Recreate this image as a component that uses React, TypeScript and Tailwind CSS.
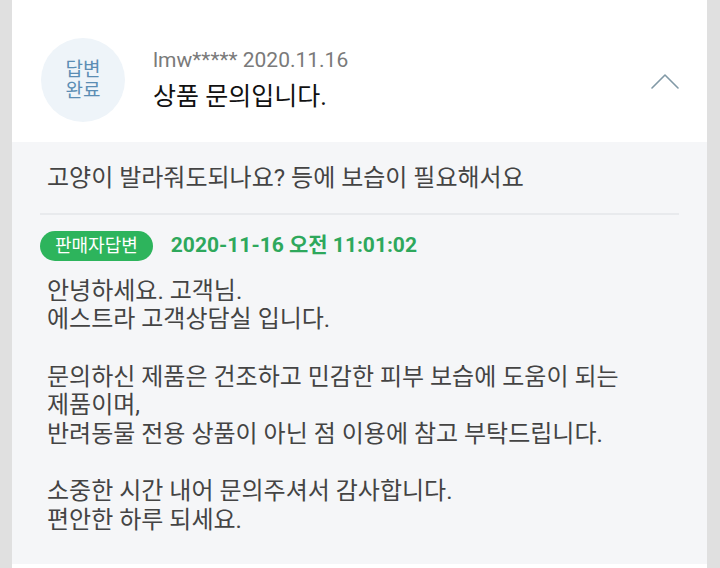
const FONT = 'Roboto, "Noto Sans CJK KR", "Noto Sans", sans-serif';

const bodyLines = [
  '안녕하세요. 고객님.',
  '에스트라 고객상담실 입니다.',
  '',
  '문의하신 제품은 건조하고 민감한 피부 보습에 도움이 되는',
  '제품이며,',
  '반려동물 전용 상품이 아닌 점 이용에 참고 부탁드립니다.',
  '',
  '소중한 시간 내어 문의주셔서 감사합니다.',
  '편안한 하루 되세요.',
];

const ChevronUp = () => (
  <svg width="28" height="16" viewBox="0 0 28 16" fill="none">
    <path d="M1 15 L14 2 L27 15" stroke="#8199a6" strokeWidth="1.6" strokeLinecap="round" strokeLinejoin="round" />
  </svg>
);

export default function App() {
  return (
    <div className="w-[720px] h-[568px] bg-[#e0e0e0] pl-[12px] pr-[13px] overflow-hidden" style={{ fontFamily: FONT }}>
      <div className="flex flex-col h-full bg-white">
        {/* question header */}
        <div className="h-[142px] flex items-start bg-white">
          <div className="ml-[29px] mt-[38px] w-[84px] h-[84px] rounded-full bg-[#eef4f9] flex flex-col items-center justify-center text-[19px] leading-[21px] text-[#5b8db4]">
            <span>답변</span>
            <span>완료</span>
          </div>
          <div className="ml-[28px] mt-[46px] flex flex-col">
            <div className="text-[21px] leading-[28px] text-[#7a7a7a]">lmw***** 2020.11.16</div>
            <div className="mt-[7px] text-[25px] leading-[32px] text-[#111]">상품 문의입니다.</div>
          </div>
          <div className="ml-auto mr-[28px] mt-[73px]">
            <ChevronUp />
          </div>
        </div>

        {/* answer panel */}
        <div className="bg-[#f5f6f8] px-[28px] pt-[21px] pb-[29px]">
          <div className="pl-[7px] text-[24px] leading-[30px] text-[#444]">고양이 발라줘도되나요? 등에 보습이 필요해서요</div>
          <div className="mt-[20px] h-[2px] bg-[#e8eaed]" />
          <div className="mt-[15px] flex items-center">
            <span className="h-[30px] px-[15px] rounded-full bg-[#2db45c] text-white text-[18px] leading-[30px]">판매자답변</span>
            <span className="ml-[18px] text-[21px] font-bold text-[#2ea85c]">2020-11-16 오전 11:01:02</span>
          </div>
          <div className="mt-[15px] pl-[7px] text-[24px] leading-[28.7px] text-[#444]">
            {bodyLines.map((line, i) => (
              <div key={i} className="h-[28.7px] whitespace-pre">{line}</div>
            ))}
          </div>
        </div>
        <div className="flex-1 bg-white" />
      </div>
    </div>
  );
}
